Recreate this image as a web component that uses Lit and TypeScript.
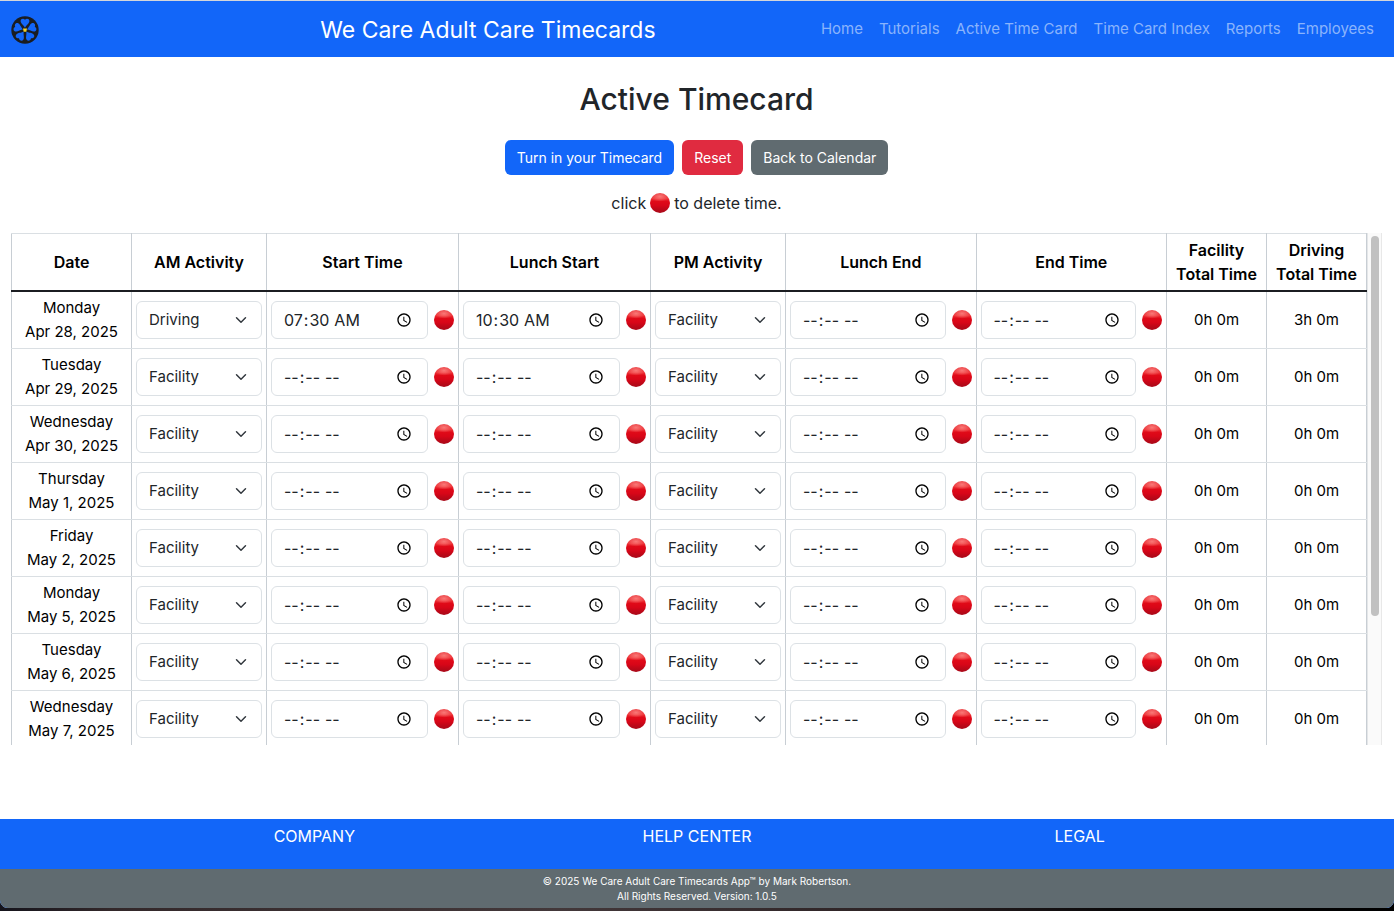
import { LitElement, html, css, svg } from "lit";
import { customElement, query, state } from "lit/decorators.js";

interface Day {
  name: string;
  date: string;
  am: string;
  pm: string;
  start: string;
  lunchStart: string;
  lunchEnd: string;
  end: string;
  facility: string;
  driving: string;
}

type TimeField = "start" | "lunchStart" | "lunchEnd" | "end";

const day = (name: string, date: string, extra: Partial<Day> = {}): Day => ({
  name,
  date,
  am: "Facility",
  pm: "Facility",
  start: "",
  lunchStart: "",
  lunchEnd: "",
  end: "",
  facility: "0h 0m",
  driving: "0h 0m",
  ...extra,
});

const LINKS = ["Home", "Tutorials", "Active Time Card", "Time Card Index", "Reports", "Employees"];

@customElement("app-root")
export class AppRoot extends LitElement {
  @state() private days: Day[] = [
    day("Monday", "Apr 28, 2025", { am: "Driving", start: "07:30", lunchStart: "10:30", driving: "3h 0m" }),
    day("Tuesday", "Apr 29, 2025"),
    day("Wednesday", "Apr 30, 2025"),
    day("Thursday", "May 1, 2025"),
    day("Friday", "May 2, 2025"),
    day("Monday", "May 5, 2025"),
    day("Tuesday", "May 6, 2025"),
    day("Wednesday", "May 7, 2025"),
    day("Thursday", "May 8, 2025"),
    day("Friday", "May 9, 2025"),
  ];

  // Scroll thumb length and offset, in percent of the track.
  @state() private thumbSize = 75;
  @state() private thumbOffset = 0;

  @query(".scroller") private scroller!: HTMLElement;
  private observer?: ResizeObserver;

  static styles = css`
    :host {
      display: block;
      box-sizing: border-box;
      height: 100vh;
      padding-bottom: 3px;
      background: linear-gradient(90deg, #15141c, #33282a 8%, #43383a 40%, #2c2224 65%, #0a0809 80%, #000);
      font-family: Inter, "Liberation Sans", sans-serif;
      font-size: 16px;
      line-height: 24px;
      color: #212529;
    }
    * {
      box-sizing: border-box;
    }
    .page {
      display: flex;
      flex-direction: column;
      height: 100%;
      background: #fff;
      border-top: 1px solid #d4d6da;
      border-radius: 0 0 8px 8px;
      overflow: hidden;
    }
    .navbar {
      display: flex;
      align-items: center;
      min-height: 56px;
      padding: 0 12px 0 11px;
      background: #1266f9;
    }
    .brand {
      flex: 0 0 152px;
      display: flex;
    }
    .brand svg {
      display: block;
      margin-top: 2px;
    }
    .title {
      flex: 1;
      padding-top: 2px;
      text-align: center;
      font-size: 23px;
      line-height: 32px;
      color: #fff;
    }
    .links {
      display: flex;
    }
    .link {
      padding: 8px;
      color: #8ab4fc;
      font-size: 15px;
      text-decoration: none;
      white-space: nowrap;
    }
    .main {
      flex: 1;
      min-height: 0;
      display: flex;
      flex-direction: column;
      align-items: center;
      padding: 23px 12px 74px 11px;
    }
    .heading {
      margin: 0;
      font-size: 30px;
      line-height: 38px;
      font-weight: 500;
    }
    .actions {
      display: flex;
      gap: 8px;
      margin-top: 22px;
    }
    .btn {
      height: 35px;
      padding: 0 12px;
      border: 0;
      border-radius: 6px;
      color: #fff;
      font: inherit;
      font-size: 14px;
    }
    .primary {
      background: #1266f9;
    }
    .danger {
      background: #e02b40;
    }
    .secondary {
      background: #606b70;
    }
    .hint {
      display: flex;
      align-items: center;
      gap: 4px;
      margin: 16px 0 18px;
    }
    .dot {
      flex: none;
      width: 20px;
      height: 20px;
      padding: 0;
      border: 0;
      border-radius: 50%;
      background:
        radial-gradient(ellipse 9px 5px at 50% 18%, rgba(255, 150, 145, 0.7), rgba(255, 90, 90, 0) 100%),
        linear-gradient(#e8363c 0%, #ee3338 28%, #e00a18 42%, #d80618 62%, #b90818 85%, #a80a1a 100%);
    }
    .sheet {
      flex: 1;
      min-height: 0;
      align-self: stretch;
      display: grid;
      grid-template-columns: 1fr 15px;
      grid-template-rows: 100%;
    }
    .scroller {
      overflow-y: auto;
      scrollbar-width: none;
      padding-bottom: 52px;
    }
    .track {
      padding: 3px 2px 3px 3px;
      background: #fafafa;
      border-left: 1px solid #e4e6e8;
      border-right: 1px solid #e8e8e8;
    }
    .rail {
      height: 100%;
      display: flex;
      flex-direction: column;
    }
    .thumb {
      flex: none;
      width: 8px;
      border-radius: 4px;
      background: #c1c1c1;
    }
    .table {
      width: 100%;
      border-collapse: collapse;
      table-layout: fixed;
      text-align: center;
      color: #000;
    }
    .c-date {
      width: 120px;
    }
    .c-activity {
      width: 135px;
    }
    .c-morning {
      width: 192px;
    }
    .c-total {
      width: 100px;
    }
    .table th,
    .table td {
      padding: 4px;
      border: 1px solid #c8ced4;
      border-top-color: #dadfe3;
      border-bottom-color: #dadfe3;
      vertical-align: middle;
    }
    .table td {
      font-size: 15px;
    }
    .table th {
      font-weight: 600;
    }
    .table thead th {
      border-bottom: 2px solid #1b1d21;
    }
    .control {
      display: block;
      width: 100%;
      min-width: 0;
      height: 38px;
      padding: 6px 12px;
      border: 1px solid #dce1e5;
      border-radius: 6px;
      background: #fff;
      color: #212529;
      font: inherit;
    }
    .clock {
      padding: 6px 11px;
      font-size: 16px;
    }
    .select {
      appearance: none;
      padding-right: 36px;
      background: #fff
        url("data:image/svg+xml,%3Csvg xmlns='http://www.w3.org/2000/svg' viewBox='0 0 16 16'%3E%3Cpath fill='none' stroke='%23343a40' stroke-linecap='round' stroke-linejoin='round' stroke-width='2' d='m2 5 6 6 6-6'/%3E%3C/svg%3E")
        no-repeat right 12px center / 16px 12px;
    }
    .time {
      display: flex;
      align-items: center;
      gap: 6px;
    }
    .footer {
      background: #1266f9;
      color: #fff;
    }
    .columns {
      display: grid;
      grid-template-columns: repeat(3, 1fr);
      max-width: 1148px;
      height: 50px;
      margin: 0 auto;
      padding-top: 5px;
      text-align: center;
    }
    .column {
      margin: 0;
      font-size: 16px;
      font-weight: 400;
    }
    .legal {
      height: 39px;
      padding-top: 5px;
      background: #606b70;
      text-align: center;
      font-size: 10px;
      line-height: 15px;
    }
    .legal p {
      margin: 0;
    }
  `;

  firstUpdated() {
    this.observer = new ResizeObserver(() => this.syncThumb());
    this.observer.observe(this.scroller);
  }

  disconnectedCallback() {
    super.disconnectedCallback();
    this.observer?.disconnect();
  }

  private syncThumb() {
    const { clientHeight, scrollHeight, scrollTop } = this.scroller;
    this.thumbSize = (clientHeight / scrollHeight) * 100;
    this.thumbOffset = (scrollTop / scrollHeight) * clientHeight;
  }

  private patchDay(i: number, patch: Partial<Day>) {
    this.days = this.days.map((d, n) => (n === i ? { ...d, ...patch } : d));
  }

  private activity(d: Day, i: number, field: "am" | "pm") {
    return html`<td>
      <select
        class="control select"
        aria-label="${d.name} ${d.date} ${field.toUpperCase()} activity"
        @change=${(e: Event) => this.patchDay(i, { [field]: (e.target as HTMLSelectElement).value })}
      >
        ${["Facility", "Driving"].map((o) => html`<option ?selected=${o === d[field]}>${o}</option>`)}
      </select>
    </td>`;
  }

  private time(d: Day, i: number, field: TimeField, label: string) {
    return html`<td>
      <div class="time">
        <input
          class="control clock"
          type="time"
          aria-label="${d.name} ${d.date} ${label}"
          .value=${d[field]}
          @change=${(e: Event) => this.patchDay(i, { [field]: (e.target as HTMLInputElement).value })}
        />
        <button
          class="dot"
          type="button"
          aria-label="Delete ${label}"
          @click=${() => this.patchDay(i, { [field]: "" })}
        ></button>
      </div>
    </td>`;
  }

  private logo() {
    return html`<svg width="28" height="28" viewBox="-14 -14 28 28" aria-hidden="true">
      <circle r="13.7" fill="#1a1d22" />
      ${[0, 72, 144, 216, 288].map(
        (a) => svg`<path
          transform="rotate(${a})"
          fill="#1266f9"
          d="M0-2C-.8-4.6-4.4-6.4-4.4-9C-4.4-11.3-1.4-11.9 0-10.2C1.4-11.9 4.4-11.3 4.4-9C4.4-6.4.8-4.6 0-2Z"
        />`
      )}
      <path d="M-2-1.6H2L1.3 1.8H-1.3Z" fill="#f5d327" />
    </svg>`;
  }

  render() {
    return html`
      <div class="page">
        <header class="navbar">
          <a class="brand" href="#" aria-label="Timecards home">${this.logo()}</a>
          <div class="title">We Care Adult Care Timecards</div>
          <nav class="links">${LINKS.map((l) => html`<a class="link" href="#">${l}</a>`)}</nav>
        </header>
        <main class="main">
          <h1 class="heading">Active Timecard</h1>
          <div class="actions">
            <button class="btn primary" type="button">Turn in your Timecard</button>
            <button class="btn danger" type="button">Reset</button>
            <button class="btn secondary" type="button">Back to Calendar</button>
          </div>
          <p class="hint"><span>click</span><span class="dot"></span><span>to delete time.</span></p>
          <div class="sheet">
            <div class="scroller" @scroll=${this.syncThumb}>
              <table class="table">
                <colgroup>
                  <col class="c-date" />
                  <col class="c-activity" />
                  <col class="c-morning" />
                  <col class="c-morning" />
                  <col class="c-activity" />
                  <col />
                  <col />
                  <col class="c-total" />
                  <col class="c-total" />
                </colgroup>
                <thead>
                  <tr>
                    <th>Date</th>
                    <th>AM Activity</th>
                    <th>Start Time</th>
                    <th>Lunch Start</th>
                    <th>PM Activity</th>
                    <th>Lunch End</th>
                    <th>End Time</th>
                    <th>Facility<br />Total Time</th>
                    <th>Driving<br />Total Time</th>
                  </tr>
                </thead>
                <tbody>
                  ${this.days.map(
                    (d, i) => html`<tr>
                      <td>${d.name}<br />${d.date}</td>
                      ${this.activity(d, i, "am")} ${this.time(d, i, "start", "start time")}
                      ${this.time(d, i, "lunchStart", "lunch start")} ${this.activity(d, i, "pm")}
                      ${this.time(d, i, "lunchEnd", "lunch end")} ${this.time(d, i, "end", "end time")}
                      <td>${d.facility}</td>
                      <td>${d.driving}</td>
                    </tr>`
                  )}
                </tbody>
              </table>
            </div>
            <div class="track" aria-hidden="true">
              <div class="rail">
                <div class="thumb" style="height:${this.thumbSize}%;margin-top:${this.thumbOffset}px"></div>
              </div>
            </div>
          </div>
        </main>
        <footer class="footer">
          <div class="columns">
            <h2 class="column">COMPANY</h2>
            <h2 class="column">HELP CENTER</h2>
            <h2 class="column">LEGAL</h2>
          </div>
          <div class="legal">
            <p>© 2025 We Care Adult Care Timecards App™ by Mark Robertson.</p>
            <p>All Rights Reserved. Version: 1.0.5</p>
          </div>
        </footer>
      </div>
    `;
  }
}
